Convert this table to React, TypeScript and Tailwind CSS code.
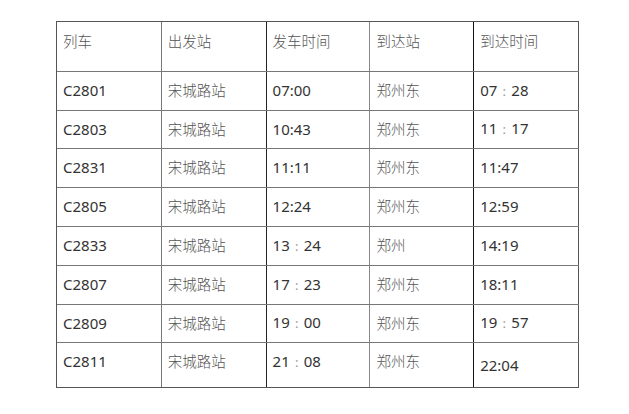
const rows: string[][] = [
  ['C2801', '宋城路站', '07:00', '郑州东', '07：28'],
  ['C2803', '宋城路站', '10:43', '郑州东', '11：17'],
  ['C2831', '宋城路站', '11:11', '郑州东', '11:47'],
  ['C2805', '宋城路站', '12:24', '郑州东', '12:59'],
  ['C2833', '宋城路站', '13：24', '郑州', '14:19'],
  ['C2807', '宋城路站', '17：23', '郑州东', '18:11'],
  ['C2809', '宋城路站', '19：00', '郑州东', '19：57'],
  ['C2811', '宋城路站', '21：08', '郑州东', '22:04'],
];

const heads = ['列车', '出发站', '发车时间', '到达站', '到达时间'];
const heights = ['h-[39px]', 'h-[38px]', 'h-[39px]', 'h-[39px]', 'h-[39px]', 'h-[39px]', 'h-[38px]', 'h-[45px]'];
const cellBorders = [
  'w-[105px] border-r border-[#777]',
  'w-[105px] border-r border-[#222]',
  'w-[104px] border-r border-[#888]',
  'w-[104px] border-r border-[#111]',
  'w-[105px] border-r border-[#555]',
];

const cjkCls = 'text-[14.5px] font-light text-[#555] [font-family:"Noto_Sans_CJK_SC",sans-serif]';

function Text({ value, col }: { value: string; col: number }) {
  if (col === 1 || col === 3) return <span className={cjkCls}>{value}</span>;
  const [a, b] = value.split('：');
  return (
    <span className='text-[15px] text-[#333] [font-family:"Noto_Sans",sans-serif]'>
      {b === undefined ? (
        value
      ) : (
        <>
          {a}
          <span className="inline-block w-[14px] text-center text-[13px] text-[#999]">:</span>
          {b}
        </>
      )}
    </span>
  );
}

export default function App() {
  return (
    <div className="h-[414px] w-[629px] bg-white pl-[56px] pt-[21px]">
      <div className="w-[523px] border-l border-t border-[#555]">
        <div className="flex h-[50px] border-b border-[#777]">
          {heads.map((h, i) => (
            <div key={h} className={`${cellBorders[i]} pl-[6px] pt-[9px] leading-[20px]`}>
              <span className={cjkCls}>{h}</span>
            </div>
          ))}
        </div>
        {rows.map((r, ri) => {
          const last = ri === rows.length - 1;
          return (
            <div key={r[0]} className={`flex ${heights[ri]} border-b ${last ? 'border-[#555]' : 'border-[#777]'}`}>
              {r.map((v, ci) => (
                <div
                  key={ci}
                  className={`${cellBorders[ci]} flex pl-[6px] leading-[20px] ${
                    last ? (ci === 4 ? 'items-start pt-[12px]' : 'items-start pt-[8px]') : 'items-center pb-[2px]'
                  }`}
                >
                  <Text value={v} col={ci} />
                </div>
              ))}
            </div>
          );
        })}
      </div>
    </div>
  );
}
